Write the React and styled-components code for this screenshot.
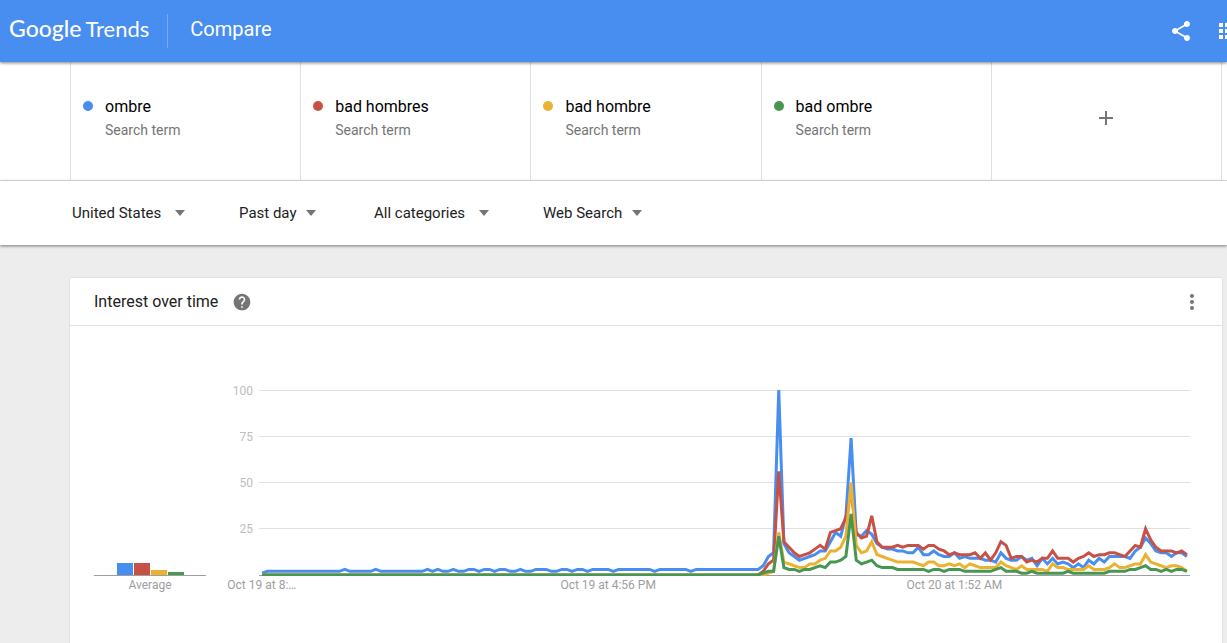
import React from 'react';
import styled, { createGlobalStyle, ThemeProvider } from 'styled-components';
import { MdAdd, MdApps, MdHelp, MdMoreVert, MdShare } from 'react-icons/md';

const theme = {
  colors: {
    primary: '#488ef0',
    background: '#ededed',
    surface: '#fff',
    border: '#e0e0e0',
    text: '#212121',
    muted: '#757575',
    axis: '#9e9e9e',
    tick: '#bdbdbd',
    series: ['#488ef0', '#c75145', '#ebb131', '#479652'],
  },
};

const GlobalStyle = createGlobalStyle`
  *, *::before, *::after {
    box-sizing: border-box;
  }
  body {
    margin: 0;
    font-family: Roboto, "Liberation Sans", sans-serif;
    color: ${theme.colors.text};
    background: ${theme.colors.background};
  }
`;

const flat = [
  1, 2, 2, 2, 2, 2, 2, 2, 2, 2, 2, 2, 2, 2, 2, 2, 3, 2, 2, 2, 2, 2, 3, 2, 2,
  2, 2, 2, 2, 2, 2, 2, 3, 2, 3, 2, 2, 3, 2, 2, 3, 3, 2, 3, 3, 2, 3, 3, 2, 2,
  3, 2, 2, 3, 3, 3, 2, 2, 3, 3, 2, 3, 3, 2, 3, 3, 3, 3, 2, 3, 3, 3, 3, 3, 3,
  3, 2, 3, 3, 3, 3, 3, 3, 2, 3, 3, 3, 3, 3, 3, 3, 3, 3, 3, 3, 3, 3,
];
const zeros = Array(97).fill(0);

const TERMS = [
  {
    name: 'ombre',
    average: 12,
    values: [
      ...flat,
      5, 10, 12, 100, 17, 12, 10, 8, 9, 10, 11, 13, 13, 18, 23, 21, 32, 74, 22,
      21, 24, 22, 17, 15, 14, 14, 13, 13, 12, 12, 15, 11, 11, 13, 11, 10, 10,
      12, 9, 10, 9, 9, 9, 8, 8, 7, 12, 9, 8, 8, 10, 8, 9, 5, 9, 6, 9, 6, 7, 6,
      4, 6, 4, 8, 6, 9, 7, 10, 10, 10, 10, 9, 13, 15, 20, 17, 13, 12, 12, 10,
      12, 12, 10,
    ],
  },
  {
    name: 'bad hombres',
    average: 12,
    values: [
      ...zeros,
      2, 6, 8, 56, 18, 15, 12, 10, 11, 12, 14, 16, 14, 23, 24, 25, 31, 45, 23,
      20, 21, 32, 18, 15, 15, 15, 16, 15, 16, 16, 16, 14, 16, 16, 14, 13, 11,
      12, 11, 11, 11, 12, 9, 12, 8, 12, 18, 16, 9, 10, 10, 7, 8, 7, 9, 9, 13,
      9, 9, 9, 7, 9, 10, 12, 10, 11, 11, 12, 12, 11, 10, 13, 16, 15, 25, 19,
      15, 13, 13, 13, 12, 13, 11,
    ],
  },
  {
    name: 'bad hombre',
    average: 5,
    values: [
      ...zeros,
      0, 1, 2, 23, 7, 6, 5, 4, 4, 6, 6, 8, 9, 13, 13, 15, 21, 50, 16, 12, 13,
      18, 11, 10, 9, 8, 7, 7, 7, 7, 6, 5, 7, 7, 5, 5, 6, 5, 6, 4, 6, 5, 4, 4,
      4, 4, 7, 5, 4, 3, 5, 3, 3, 3, 3, 2, 6, 4, 4, 3, 3, 3, 3, 5, 3, 3, 3, 4,
      6, 4, 4, 5, 6, 6, 11, 7, 6, 5, 4, 5, 5, 4, 2,
    ],
  },
  {
    name: 'bad ombre',
    average: 3,
    values: [
      ...zeros,
      1, 2, 2, 21, 4, 3, 3, 2, 3, 3, 4, 5, 4, 7, 7, 8, 10, 33, 8, 6, 7, 8, 5,
      4, 4, 4, 3, 3, 3, 3, 3, 3, 2, 3, 3, 2, 3, 3, 3, 2, 2, 2, 2, 2, 2, 3, 4,
      2, 2, 2, 1, 1, 2, 1, 1, 1, 1, 1, 1, 2, 1, 1, 1, 1, 1, 1, 1, 2, 2, 2, 2,
      3, 3, 4, 5, 3, 3, 2, 3, 2, 3, 3, 2,
    ],
  },
];

const FILTERS = [
  { label: 'Location', value: 'United States' },
  { label: 'Time range', value: 'Past day', near: true },
  { label: 'Category', value: 'All categories' },
  { label: 'Search type', value: 'Web Search', near: true },
];

const Page = styled.div`
  display: flex;
  flex-direction: column;
  min-height: 100vh;
  overflow: hidden;
`;

const Header = styled.header`
  position: relative;
  z-index: 1;
  display: flex;
  align-items: center;
  height: 62px;
  padding-left: 9px;
  color: #fff;
  background: ${props => props.theme.colors.primary};
  box-shadow: 0 1px 3px rgba(0, 0, 0, 0.5);
`;

const Logo = styled.a`
  display: flex;
  align-items: baseline;
  gap: 4px;
  height: 34px;
  padding-right: 18px;
  margin-right: 22px;
  border-right: 1px solid rgba(255, 255, 255, 0.25);
  color: inherit;
  font-family: Lato, "Open Sans", sans-serif;
  font-size: 22px;
  line-height: 28px;
  text-decoration: none;
`;

const LogoName = styled.span`
  font-size: 23px;
  font-weight: 500;
`;

const PageTitle = styled.h1`
  flex: 1;
  margin: 0;
  padding-bottom: 4px;
  font-size: 20px;
  line-height: 24px;
  font-weight: 400;
`;

const IconButton = styled.button`
  display: flex;
  padding: 0;
  border: 0;
  background: none;
  color: ${props => props.color || props.theme.colors.muted};
  cursor: pointer;
`;

const HeaderActions = styled.div`
  display: flex;
  gap: 22px;
  margin-right: -12px;
`;

const Terms = styled.section`
  padding: 0 5px 0 70px;
  background: ${props => props.theme.colors.surface};
  border-bottom: 1px solid ${props => props.theme.colors.border};
`;

const TermList = styled.div`
  display: grid;
  grid-template-columns: repeat(5, 1fr);
  height: 118px;
  border-right: 1px solid ${props => props.theme.colors.border};
`;

const Term = styled.div`
  display: flex;
  gap: 12px;
  padding: 35px 12px 0;
  border-left: 1px solid ${props => props.theme.colors.border};
`;

const Dot = styled.span`
  width: 10px;
  height: 10px;
  margin-top: 4px;
  border-radius: 50%;
  background: ${props => props.color};
`;

const TermName = styled.div`
  color: #000;
  font-size: 16px;
  line-height: 20px;
`;

const TermType = styled.div`
  margin-top: 3px;
  color: ${props => props.theme.colors.muted};
  font-size: 14px;
  line-height: 20px;
`;

const AddTerm = styled(Term)`
  justify-content: center;
  align-items: center;
  padding: 0 0 6px;
`;

const Filters = styled.form`
  position: relative;
  display: flex;
  align-items: center;
  gap: 54px;
  height: 64px;
  padding-left: 72px;
  background: ${props => props.theme.colors.surface};
  box-shadow: 0 1px 3px rgba(0, 0, 0, 0.5);
`;

const FilterField = styled.label`
  display: grid;
  align-items: center;

  > * {
    grid-area: 1 / 1;
  }
`;

const FilterSelect = styled.select`
  appearance: none;
  padding: 0 23px 0 0;
  border: 0;
  background: none;
  color: inherit;
  font-family: inherit;
  font-size: 15px;
  line-height: 20px;
`;

const FilterArrow = styled.span`
  justify-self: end;
  margin-right: ${props => (props.$near ? '4px' : '0')};
  border: solid transparent;
  border-width: 6px 5px 0;
  border-top-color: ${props => props.theme.colors.muted};
  pointer-events: none;
`;

const Main = styled.main`
  flex: 1;
  display: flex;
  padding: 33px 5px 0 70px;
`;

const Card = styled.section`
  flex: 1;
  min-width: 0;
  background: ${props => props.theme.colors.surface};
  border-radius: 2px 2px 0 0;
  box-shadow: 0 0 2px rgba(0, 0, 0, 0.16);
`;

const CardHeader = styled.div`
  display: flex;
  align-items: center;
  gap: 14px;
  height: 48px;
  padding: 0 18px 0 24px;
  border-bottom: 1px solid ${props => props.theme.colors.border};
`;

const CardTitle = styled.h2`
  margin: 0;
  font-size: 16px;
  line-height: 24px;
  font-weight: 400;
`;

const CardMenu = styled.div`
  margin-left: auto;
`;

const CardBody = styled.div`
  display: flex;
  align-items: flex-end;
  padding: 54px 32px 0 24px;
`;

const Average = styled.div`
  width: 112px;
  padding-bottom: 2px;
  color: ${props => props.theme.colors.axis};
  font-size: 12px;
  line-height: 18px;
  text-align: center;
`;

const Bars = styled.div`
  display: flex;
  align-items: flex-end;
  justify-content: center;
  gap: 1px;
  border-bottom: 1px solid ${props => props.theme.colors.axis};
`;

const Bar = styled.div`
  width: 16px;
  background: ${props => props.color};
`;

const Plot = styled.svg`
  flex: 1;
  min-width: 0;
  height: 216px;
  margin-left: 53px;
  overflow: visible;
  font-size: 12px;
`;

const ZERO_Y = 195;
const UNIT = 1.85;

const toY = value => ZERO_Y - value * UNIT;

const LineChart = () => (
  <Plot role="img" aria-label="Interest over time">
    {[100, 75, 50, 25, 0].map(value => {
      const y = Math.floor(toY(value)) + 0.5;
      return (
        <g key={value}>
          <line
            x1="0"
            x2="100%"
            y1={y}
            y2={y}
            stroke={value ? theme.colors.border : theme.colors.axis}
          />
          {value > 0 && (
            <text x="-6" y={y + 4} textAnchor="end" fill={theme.colors.tick}>
              {value}
            </text>
          )}
        </g>
      );
    })}
    {/* one unit per sample, stretched to the plot's width and cut at the axis */}
    <svg
      x="0"
      y="0"
      width="100%"
      height="196"
      viewBox="-0.6 0 180.2 196"
      preserveAspectRatio="none"
    >
      {TERMS.map((term, i) => (
        <polyline
          key={term.name}
          points={term.values.map((v, x) => `${x},${toY(v)}`).join(' ')}
          fill="none"
          stroke={theme.colors.series[i]}
          strokeWidth="3"
          vectorEffect="non-scaling-stroke"
        />
      ))}
    </svg>
    <g fill={theme.colors.axis} textAnchor="middle">
      <text x="0.3%" y="209">Oct 19 at 8:…</text>
      <text x="37.5%" y="209">Oct 19 at 4:56 PM</text>
      <text x="74.7%" y="209">Oct 20 at 1:52 AM</text>
    </g>
  </Plot>
);

const App = () => (
  <ThemeProvider theme={theme}>
    <GlobalStyle />
    <Page>
      <Header>
        <Logo href="#">
          <LogoName>Google</LogoName>
          <span>Trends</span>
        </Logo>
        <PageTitle>Compare</PageTitle>
        <HeaderActions>
          <IconButton color="#fff" aria-label="Share">
            <MdShare size={24} />
          </IconButton>
          <IconButton color="#fff" aria-label="Apps">
            <MdApps size={24} />
          </IconButton>
        </HeaderActions>
      </Header>
      <Terms>
        <TermList>
          {TERMS.map((term, i) => (
            <Term key={term.name}>
              <Dot color={theme.colors.series[i]} />
              <div>
                <TermName>{term.name}</TermName>
                <TermType>Search term</TermType>
              </div>
            </Term>
          ))}
          <AddTerm>
            <IconButton aria-label="Add comparison">
              <MdAdd size={24} />
            </IconButton>
          </AddTerm>
        </TermList>
      </Terms>
      <Filters>
        {FILTERS.map(filter => (
          <FilterField key={filter.label}>
            <FilterSelect aria-label={filter.label}>
              <option>{filter.value}</option>
            </FilterSelect>
            <FilterArrow $near={filter.near} />
          </FilterField>
        ))}
      </Filters>
      <Main>
        <Card>
          <CardHeader>
            <CardTitle>Interest over time</CardTitle>
            <IconButton aria-label="Help">
              <MdHelp size={20} />
            </IconButton>
            <CardMenu>
              <IconButton aria-label="More">
                <MdMoreVert size={24} />
              </IconButton>
            </CardMenu>
          </CardHeader>
          <CardBody>
            <Average>
              <Bars>
                {TERMS.map((term, i) => (
                  <Bar
                    key={term.name}
                    color={theme.colors.series[i]}
                    style={{ height: term.average }}
                  />
                ))}
              </Bars>
              Average
            </Average>
            <LineChart />
          </CardBody>
        </Card>
      </Main>
    </Page>
  </ThemeProvider>
);

export default App;
